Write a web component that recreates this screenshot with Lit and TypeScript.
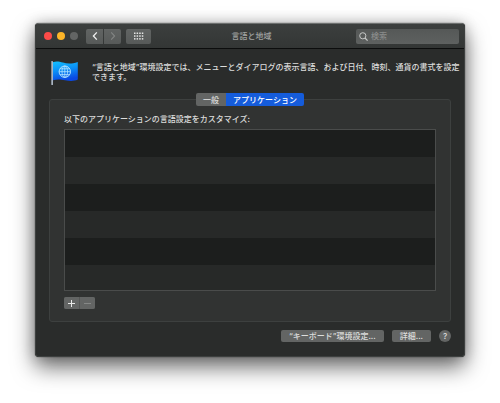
import { LitElement, html, css, svg } from "lit";
import { customElement, state } from "lit/decorators.js";
import { classMap } from "lit/directives/class-map.js";

const flagIcon = svg`
  <svg class="flag" viewBox="0 0 28 26" aria-hidden="true">
    <defs>
      <linearGradient id="cloth" x1="0" y1="0" x2="0.25" y2="1">
        <stop offset="0" stop-color="#12c0ff" />
        <stop offset="0.5" stop-color="#0b8ff6" />
        <stop offset="1" stop-color="#0a48e4" />
      </linearGradient>
    </defs>
    <path d="M2.8 2.2C6 1 9 1.4 13 2.6S22 4 27.8 2V19.6C24 21.4 20 21.4 15 20.3S7 19.4 2.8 20.2Z" fill="url(#cloth)" />
    <rect x="1.3" y="1" width="1.7" height="24" rx="0.6" fill="#a9b4c2" />
    <g fill="none" stroke="#b4e2ff" stroke-width="0.8">
      <circle cx="14.8" cy="11.7" r="5.7" stroke-width="1" />
      <ellipse cx="14.8" cy="11.7" rx="2.8" ry="5.7" />
      <path d="M14.8 6V17.4M9.1 11.7H20.5M10 8.8H19.6M10 14.6H19.6" />
    </g>
  </svg>`;

@customElement("app-root")
export class AppRoot extends LitElement {
  @state() private tab = "apps";

  static styles = css`
    :host {
      display: block;
      padding: 23px 35px 47px;
      background: #fff;
      color: #dcdddc;
      font: 500 8px/10px Inter, "Noto Sans CJK JP", sans-serif;
    }
    * {
      box-sizing: border-box;
    }
    button,
    input {
      margin: 0;
      padding: 0;
      border: 0;
      color: inherit;
      font: inherit;
    }
    button {
      display: flex;
      align-items: center;
      justify-content: center;
      background: #636564;
    }
    svg {
      display: block;
    }
    .window {
      border: 1px solid #3d403f;
      border-top-color: #6d706f;
      border-radius: 4px;
      background: #2a2c2b;
      box-shadow: 0 0 1px #000, 0 10px 22px rgba(0, 0, 0, 0.58), 0 0 14px rgba(0, 0, 0, 0.2);
    }
    .titlebar {
      display: grid;
      grid-template-columns: 1fr auto 1fr;
      align-items: center;
      height: 25px;
      padding: 0 5px 0 8px;
      border-bottom: 1px solid #0c0d0d;
      border-radius: 3px 3px 0 0;
      background: linear-gradient(#3c3f3e, #333635);
    }
    .left {
      display: flex;
      align-items: center;
    }
    .lights {
      display: flex;
      gap: 5px;
      margin-right: 8px;
    }
    .light {
      width: 8px;
      height: 8px;
      border-radius: 50%;
    }
    .close {
      background: #fc4b48;
    }
    .minimize {
      background: #fdb528;
    }
    .zoom {
      background: #636564;
    }
    .nav {
      display: flex;
      gap: 1px;
      margin-right: 5px;
    }
    .tool {
      width: 17px;
      height: 15px;
      background: linear-gradient(#616463, #575a59);
      border-radius: 2px;
    }
    .back {
      border-radius: 2px 0 0 2px;
    }
    .forward {
      border-radius: 0 2px 2px 0;
      color: #838584;
    }
    .all {
      width: 25px;
    }
    .title {
      margin: 0;
      color: #a0a2a1;
      font: inherit;
    }
    .search {
      display: flex;
      align-items: center;
      justify-self: end;
      gap: 3px;
      width: 103px;
      height: 15px;
      padding: 0 3px;
      border-radius: 2px;
      background: linear-gradient(#555857, #5e6160);
    }
    .search input {
      flex: 1;
      min-width: 0;
      height: 12px;
      background: none;
      outline: none;
    }
    .search input::placeholder {
      color: #8a8c8b;
      opacity: 1;
    }
    .intro {
      display: flex;
      gap: 14px;
      padding: 11px 0 0 14px;
    }
    .flag {
      flex: none;
      width: 28px;
      height: 26px;
    }
    .intro p {
      margin: 2px 0 0;
    }
    .body {
      padding: 7px 13px 14px;
    }
    .tabs {
      position: relative;
      display: flex;
      width: fit-content;
      margin: 0 auto -7px;
      overflow: hidden;
      border-radius: 2px;
    }
    .tab {
      height: 13px;
      padding: 0 7px;
    }
    .selected {
      background: #155cdb;
      color: #fff;
    }
    .panel {
      padding: 14px 14px 12px;
      border: 1px solid #3d403f;
      border-radius: 3px;
      background: #313332;
    }
    .caption {
      display: block;
      margin-bottom: 5px;
    }
    .list {
      height: 162px;
      margin: 0 0 6px;
      padding: 0;
      overflow: hidden;
      border: 1px solid #4a4c4b;
      list-style: none;
    }
    .row {
      height: 27px;
      background: #1c1e1d;
    }
    .row:nth-child(even) {
      background: #272928;
    }
    .edit {
      display: flex;
      gap: 1px;
      width: fit-content;
      overflow: hidden;
      border-radius: 2px;
      background: #545655;
    }
    .edit button {
      width: 15px;
      height: 12px;
    }
    .edit button:disabled {
      color: #868887;
    }
    .footer {
      display: flex;
      justify-content: flex-end;
      gap: 8px;
      margin-top: 8px;
    }
    .push {
      height: 12px;
      padding: 0 8px;
      border-radius: 2px;
    }
    .help {
      width: 12px;
      height: 12px;
      border-radius: 50%;
    }
  `;

  private renderTab(id: string, label: string) {
    return html`<button
      role="tab"
      aria-selected=${this.tab === id}
      class=${classMap({ tab: true, selected: this.tab === id })}
      @click=${() => (this.tab = id)}
    >${label}</button>`;
  }

  render() {
    return html`
      <main class="window">
        <header class="titlebar">
          <div class="left">
            <div class="lights">
              <button class="light close" aria-label="閉じる"></button>
              <button class="light minimize" aria-label="しまう"></button>
              <button class="light zoom" aria-label="拡大" disabled></button>
            </div>
            <div class="nav">
              <button class="tool back" aria-label="戻る">
                <svg width="6" height="10" viewBox="0 0 6 10" fill="none" stroke="#f0f0f0" stroke-width="1.3"><path d="M4.8 1.4 1.4 5l3.4 3.6" /></svg>
              </button>
              <button class="tool forward" aria-label="進む" disabled>
                <svg width="6" height="10" viewBox="0 0 6 10" fill="none" stroke="currentColor" stroke-width="1.1"><path d="M1.2 1.4 4.6 5 1.2 8.6" /></svg>
              </button>
            </div>
            <button class="tool all" aria-label="すべてを表示">
              <svg width="11" height="8" viewBox="0 0 11 8" fill="#e6e7e6">
                ${[0, 1, 2].map((r) => [0, 1, 2, 3].map((c) => svg`<rect x=${1 + c * 2.6} y=${0.5 + r * 2.8} width="1.5" height="1.5" />`))}
              </svg>
            </button>
          </div>
          <h1 class="title">言語と地域</h1>
          <label class="search">
            <svg width="9" height="9" viewBox="0 0 9 9" fill="none" stroke="#c6c8c7"><circle cx="3.8" cy="3.8" r="3.1" /><path d="M6 6 8.6 8.6" stroke-width="1.2" /></svg>
            <input type="search" aria-label="検索" placeholder="検索" />
          </label>
        </header>
        <section class="intro">
          ${flagIcon}
          <p>“言語と地域”環境設定では、メニューとダイアログの表示言語、および日付、時刻、通貨の書式を設定<br />できます。</p>
        </section>
        <div class="body">
          <div class="tabs" role="tablist">
            ${this.renderTab("general", "一般")}${this.renderTab("apps", "アプリケーション")}
          </div>
          <section class="panel">
            <span class="caption" id="caption">以下のアプリケーションの言語設定をカスタマイズ:</span>
            <ul class="list" aria-labelledby="caption">
              ${Array.from({ length: 6 }, () => html`<li class="row"></li>`)}
            </ul>
            <div class="edit">
              <button aria-label="追加">
                <svg width="7" height="7" viewBox="0 0 7 7" stroke="#e8e9e8"><path d="M3.5 0V7M0 3.5H7" /></svg>
              </button>
              <button aria-label="削除" disabled>
                <svg width="7" height="7" viewBox="0 0 7 7" stroke="currentColor"><path d="M0 3.5H7" /></svg>
              </button>
            </div>
          </section>
          <footer class="footer">
            <button class="push">“キーボード”環境設定...</button>
            <button class="push">詳細...</button>
            <button class="help" aria-label="ヘルプ">?</button>
          </footer>
        </div>
      </main>
    `;
  }
}
